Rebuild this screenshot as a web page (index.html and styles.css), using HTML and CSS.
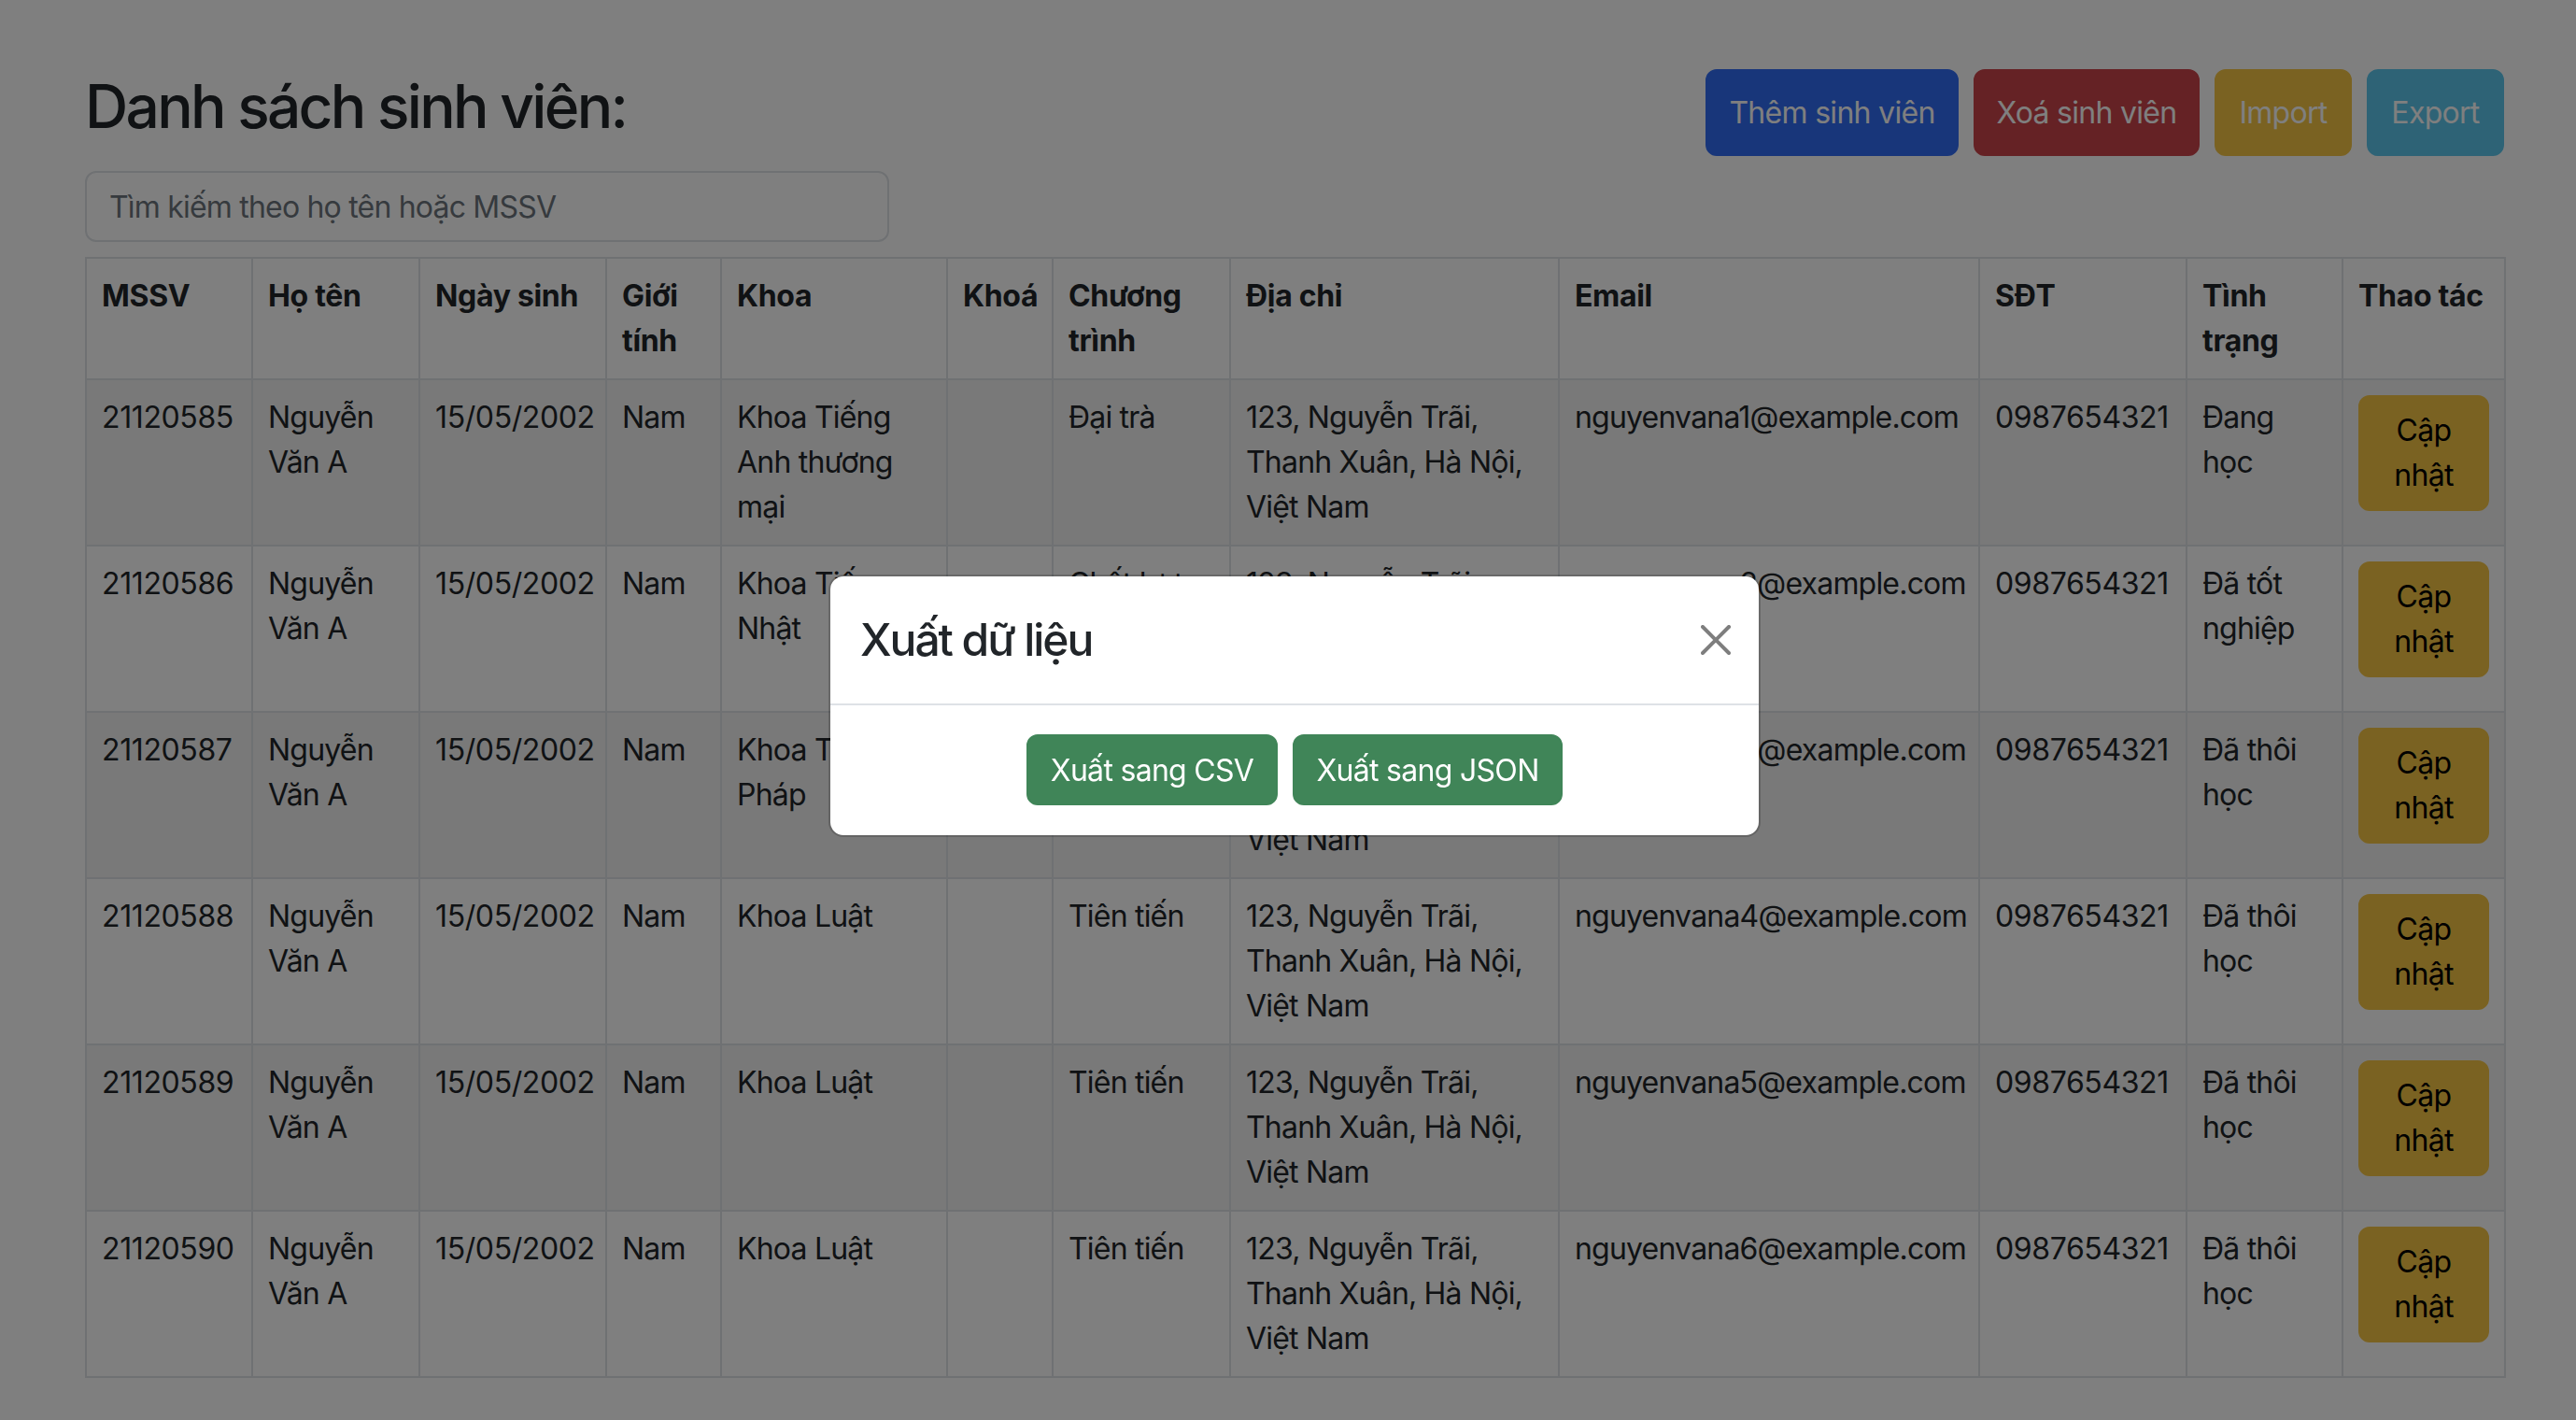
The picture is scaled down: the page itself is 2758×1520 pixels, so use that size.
FILE: index.html
```html
<!DOCTYPE html>
<html lang="vi">
<head>
<meta charset="utf-8">
<title>Danh sách sinh viên</title>
<link rel="stylesheet" href="styles.css">
</head>
<body>
<main class="page">
  <div class="topbar">
    <h2 class="title">Danh sách sinh viên:</h2>
    <div class="actions">
      <button class="btn btn-primary btn-add">Thêm sinh viên</button>
      <button class="btn btn-danger btn-del">Xoá sinh viên</button>
      <button class="btn btn-warning-light btn-import">Import</button>
      <button class="btn btn-info btn-export">Export</button>
    </div>
  </div>
  <input class="search" type="text" placeholder="Tìm kiếm theo họ tên hoặc MSSV">
  <table class="table">
    <colgroup>
      <col class="c-mssv"><col class="c-name"><col class="c-dob"><col class="c-sex"><col class="c-khoa"><col class="c-khoa2"><col class="c-ct"><col class="c-addr"><col class="c-email"><col class="c-phone"><col class="c-status"><col class="c-act">
    </colgroup>
    <thead>
      <tr>
        <th>MSSV</th><th>Họ tên</th><th>Ngày sinh</th><th>Giới tính</th><th>Khoa</th><th>Khoá</th><th>Chương trình</th><th>Địa chỉ</th><th>Email</th><th>SĐT</th><th>Tình trạng</th><th>Thao tác</th>
      </tr>
    </thead>
    <tbody>
      <tr>
        <td class="num">21120585</td><td>Nguyễn Văn A</td><td class="num">15/05/2002</td><td>Nam</td><td>Khoa Tiếng Anh thương mại</td><td></td><td>Đại trà</td><td>123, Nguyễn Trãi, Thanh Xuân, Hà Nội, Việt Nam</td><td class="nw">nguyenvana1@example.com</td><td class="num">0987654321</td><td>Đang học</td><td><button class="btn-update">Cập nhật</button></td>
      </tr>
      <tr>
        <td class="num">21120586</td><td>Nguyễn Văn A</td><td class="num">15/05/2002</td><td>Nam</td><td>Khoa Tiếng Nhật</td><td></td><td>Chất lượng cao</td><td>123, Nguyễn Trãi, Thanh Xuân, Hà Nội, Việt Nam</td><td class="nw">nguyenvana2@example.com</td><td class="num">0987654321</td><td>Đã tốt nghiệp</td><td><button class="btn-update">Cập nhật</button></td>
      </tr>
      <tr>
        <td class="num">21120587</td><td>Nguyễn Văn A</td><td class="num">15/05/2002</td><td>Nam</td><td>Khoa Tiếng Pháp</td><td></td><td>Chất lượng cao</td><td>123, Nguyễn Trãi, Thanh Xuân, Hà Nội, Việt Nam</td><td class="nw">nguyenvana3@example.com</td><td class="num">0987654321</td><td>Đã thôi học</td><td><button class="btn-update">Cập nhật</button></td>
      </tr>
      <tr>
        <td class="num">21120588</td><td>Nguyễn Văn A</td><td class="num">15/05/2002</td><td>Nam</td><td>Khoa Luật</td><td></td><td>Tiên tiến</td><td>123, Nguyễn Trãi, Thanh Xuân, Hà Nội, Việt Nam</td><td class="nw">nguyenvana4@example.com</td><td class="num">0987654321</td><td>Đã thôi học</td><td><button class="btn-update">Cập nhật</button></td>
      </tr>
      <tr>
        <td class="num">21120589</td><td>Nguyễn Văn A</td><td class="num">15/05/2002</td><td>Nam</td><td>Khoa Luật</td><td></td><td>Tiên tiến</td><td>123, Nguyễn Trãi, Thanh Xuân, Hà Nội, Việt Nam</td><td class="nw">nguyenvana5@example.com</td><td class="num">0987654321</td><td>Đã thôi học</td><td><button class="btn-update">Cập nhật</button></td>
      </tr>
      <tr>
        <td class="num">21120590</td><td>Nguyễn Văn A</td><td class="num">15/05/2002</td><td>Nam</td><td>Khoa Luật</td><td></td><td>Tiên tiến</td><td>123, Nguyễn Trãi, Thanh Xuân, Hà Nội, Việt Nam</td><td class="nw">nguyenvana6@example.com</td><td class="num">0987654321</td><td>Đã thôi học</td><td><button class="btn-update">Cập nhật</button></td>
      </tr>
    </tbody>
  </table>
</main>

<div class="backdrop"></div>

<div class="modal" role="dialog">
  <div class="modal-content">
    <div class="modal-header">
      <h4 class="modal-title">Xuất dữ liệu</h4>
      <button class="btn-close" aria-label="Close">
        <svg viewBox="0 0 16 16" width="32" height="32"><path fill="#000" d="M.293.293a1 1 0 0 1 1.414 0L8 6.586 14.293.293a1 1 0 1 1 1.414 1.414L9.414 8l6.293 6.293a1 1 0 0 1-1.414 1.414L8 9.414l-6.293 6.293a1 1 0 0 1-1.414-1.414L6.586 8 .293 1.707a1 1 0 0 1 0-1.414z"/></svg>
      </button>
    </div>
    <div class="modal-body">
      <button class="btn btn-success btn-csv">Xuất sang CSV</button>
      <button class="btn btn-success btn-json">Xuất sang JSON</button>
    </div>
  </div>
</div>
</body>
</html>
```

FILE: styles.css
```css
* { box-sizing: border-box; }

html, body {
  margin: 0;
  padding: 0;
  background: #fff;
}

body {
  font-family: Inter, "Noto Sans", "Liberation Sans", sans-serif;
  font-size: 32px;
  line-height: 48px;
  color: #212529;
  letter-spacing: -0.025em;
}

.page {
  padding: 74px 77px 40px 91px;
}

.topbar {
  display: flex;
  justify-content: space-between;
  align-items: flex-start;
  height: 93px;
}

.title {
  margin: 1px 0 0;
  font-size: 64px;
  font-weight: 500;
  line-height: 77px;
  letter-spacing: -0.042em;
}

.actions {
  display: flex;
  gap: 16px;
}

.btn {
  display: inline-flex;
  align-items: center;
  justify-content: center;
  height: 93px;
  padding: 0;
  border: 2px solid transparent;
  border-radius: 12px;
  font-family: inherit;
  font-size: 32px;
  letter-spacing: -0.022em;
  color: #fff;
  cursor: pointer;
}

.btn-primary { background: #316cf4; border-color: #316cf4; }
.btn-danger { background: #cb444a; border-color: #cb444a; }
.btn-warning-light { background: #f5c444; border-color: #f5c444; }
.btn-info { background: #5cc7ec; border-color: #5cc7ec; }
.btn-success { background: #408558; border-color: #408558; }

.btn-add { width: 271px; }
.btn-del { width: 242px; }
.btn-import { width: 147px; }
.btn-export { width: 147px; }

.search {
  display: block;
  margin-top: 16px;
  width: 861px;
  height: 76px;
  padding: 0 24px;
  border: 2px solid #dee2e6;
  border-radius: 12px;
  font-family: inherit;
  font-size: 32px;
  letter-spacing: -0.025em;
  color: #212529;
  background: #fff;
}

.search::placeholder { color: #6c757d; }

.table {
  margin-top: 16px;
  width: 2590px;
  border-collapse: collapse;
  table-layout: fixed;
  border: 2px solid #dee2e6;
}

.c-mssv { width: 178px; }
.c-name { width: 179px; }
.c-dob { width: 200px; }
.c-sex { width: 123px; }
.c-khoa { width: 242px; }
.c-khoa2 { width: 113px; }
.c-ct { width: 190px; }
.c-addr { width: 352px; }
.c-email { width: 450px; }
.c-phone { width: 222px; }
.c-status { width: 167px; }
.c-act { width: 174px; }

.table th,
.table td {
  border: 2px solid #dee2e6;
  padding: 16px;
  vertical-align: top;
  text-align: left;
}

.table th {
  font-weight: 700;
  letter-spacing: -0.01em;
}

.table tbody tr:nth-child(odd) td { background: #f2f2f2; }

.nw { white-space: nowrap; }

.num {
  white-space: nowrap;
  letter-spacing: -0.012em;
}

.btn-update {
  display: block;
  width: 100%;
  padding: 12px 24px;
  border: 2px solid #f5c444;
  border-radius: 12px;
  background: #f5c444;
  color: #000;
  font-family: inherit;
  font-size: 32px;
  line-height: 48px;
  letter-spacing: -0.02em;
  text-align: center;
}

.backdrop {
  position: fixed;
  inset: 0;
  background: #000;
  opacity: 0.5;
}

.modal {
  position: fixed;
  left: 887px;
  top: 615px;
  width: 998px;
}

.modal-content {
  background: #fff;
  border: 2px solid rgba(0, 0, 0, 0.175);
  border-radius: 16px;
  background-clip: padding-box;
}

.modal-header {
  display: flex;
  align-items: center;
  justify-content: space-between;
  padding: 32px;
  border-bottom: 2px solid #dee2e6;
}

.modal-title {
  margin: 0;
  font-size: 48px;
  font-weight: 500;
  line-height: 72px;
  letter-spacing: -0.043em;
}

.btn-close {
  display: block;
  width: 32px;
  height: 32px;
  margin-right: -2px;
  padding: 0;
  border: 0;
  background: none;
  opacity: 0.5;
}

.btn-close svg { display: block; }

.modal-body {
  display: flex;
  justify-content: center;
  gap: 16px;
  padding: 31px 32px 32px;
}

.modal-body .btn {
  height: 76px;
}

.btn-csv { width: 269px; }
.btn-json { width: 289px; }
```
